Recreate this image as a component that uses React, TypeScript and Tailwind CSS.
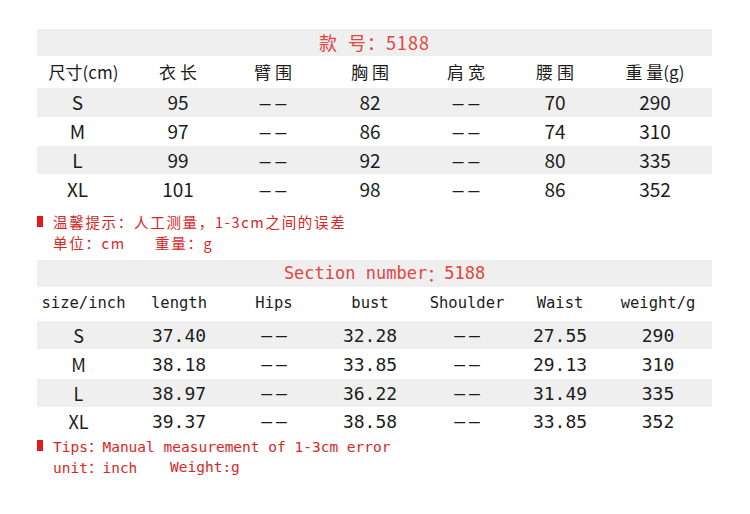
const cjk = { fontFamily: '"Noto Sans CJK SC", "Noto Sans", sans-serif' };
const mono = { fontFamily: '"DejaVu Sans Mono", "Noto Sans CJK SC", monospace' };

const w1 = ["w-[93px]", "w-[96px]", "w-[94px]", "w-[100px]", "w-[92px]", "w-[86px]", "w-[114px]"];
const w2 = ["w-[95px]", "w-[94px]", "w-[96px]", "w-[96px]", "w-[98px]", "w-[88px]", "w-[108px]"];

const cnHead = ["尺寸(cm)", "衣 长", "臂 围", "胸 围", "肩 宽", "腰 围", "重 量(g)"];
const cnRows = [
  ["S", "95", "--", "82", "--", "70", "290"],
  ["M", "97", "--", "86", "--", "74", "310"],
  ["L", "99", "--", "92", "--", "80", "335"],
  ["XL", "101", "--", "98", "--", "86", "352"],
];

const enHead = ["size/inch", "length", "Hips", "bust", "Shoulder", "Waist", "weight/g"];
const enRows = [
  ["S", "37.40", "--", "32.28", "--", "27.55", "290"],
  ["M", "38.18", "--", "33.85", "--", "29.13", "310"],
  ["L", "38.97", "--", "36.22", "--", "31.49", "335"],
  ["XL", "39.37", "--", "38.58", "--", "33.85", "352"],
];

const rowH1 = ["h-[29px]", "h-[29px]", "h-[28px]", "h-[30px]"];
const rowH2 = ["h-[28px]", "h-[30px]", "h-[28px]", "h-[29px]"];

function Row({ cells, widths, className, font, dash }: { cells: string[]; widths: string[]; className: string; font: React.CSSProperties; dash: string }) {
  return (
    <div className={`flex items-center ${className}`}>
      {cells.map((c, i) => (
        <div
          key={i}
          className={`${widths[i]} text-center whitespace-pre ${i === 0 ? "pr-[12px]" : ""} ${c === "--" ? dash : ""}`}
          style={i === 0 ? cjk : font}
        >
          {c === "--" ? "––" : c}
        </div>
      ))}
    </div>
  );
}

export default function App() {
  return (
    <div className="w-[750px] h-[514px] bg-white text-[#1c1c1c] pt-[29px]">
      {/* chinese table */}
      <div className="ml-[37px] w-[675px]">
        <div className="h-[27px] bg-[#efefef] flex items-center justify-center text-[18px] text-[#e2453f] tracking-[1px]" style={cjk}>
          款&nbsp;&nbsp;号：5188
        </div>
        <div className="flex items-center h-[32px] text-[17px]" style={cjk}>
          {cnHead.map((c, i) => (
            <div key={i} className={`${w1[i]} text-center whitespace-pre`}>
              {c}
            </div>
          ))}
        </div>
        {cnRows.map((r, i) => (
          <Row
            key={r[0]}
            cells={r}
            widths={w1}
            dash="tracking-[2px] pl-[2px] scale-x-[1.3]"
            className={`${rowH1[i]} text-[19px] ${i % 2 === 0 ? "bg-[#efefef]" : ""}`}
            font={cjk}
          />
        ))}
      </div>

      <div className="ml-[37px] mt-[7px] flex items-start gap-[10px] text-[#d9261f]" style={cjk}>
        <div className="w-[6px] h-[11px] bg-[#e31a1a] mt-[5px]" />
        <div className="text-[14.5px] leading-[21px] tracking-[1.7px]">
          <div>温馨提示：人工测量，1-3cm之间的误差</div>
          <div className="flex">
            <span className="w-[102px]">单位：cm</span>
            <span>重量：g</span>
          </div>
        </div>
      </div>

      {/* english table */}
      <div className="ml-[37px] w-[675px] mt-[7px]">
        <div className="h-[27px] bg-[#efefef] flex items-center justify-center pl-[20px] text-[17px] text-[#e2453f]" style={mono}>
          Section number<span style={cjk}>：</span>5188
        </div>
        <div className="flex items-center h-[34px] text-[15.5px]" style={mono}>
          {enHead.map((c, i) => (
            <div key={i} className={`${w2[i]} text-center ${i === 0 ? "pr-[2px]" : ""}`}>
              {c}
            </div>
          ))}
        </div>
        {enRows.map((r, i) => (
          <Row
            key={r[0]}
            cells={r}
            widths={w2}
            dash="tracking-[4px] pl-[4px]"
            className={`${rowH2[i]} text-[18px] ${i % 2 === 0 ? "bg-[#efefef]" : ""}`}
            font={mono}
          />
        ))}
      </div>

      <div className="ml-[37px] flex items-start gap-[10px] text-[#d9261f]" style={mono}>
        <div className="w-[6px] h-[11px] bg-[#e31a1a] mt-[4px]" />
        <div className="text-[14.5px] leading-[20px]">
          <div>
            Tips<span style={cjk}>：</span>Manual measurement of 1-3cm error
          </div>
          <div className="flex">
            <span className="w-[117px]">
              unit<span style={cjk}>：</span>inch
            </span>
            <span>Weight:g</span>
          </div>
        </div>
      </div>
    </div>
  );
}
